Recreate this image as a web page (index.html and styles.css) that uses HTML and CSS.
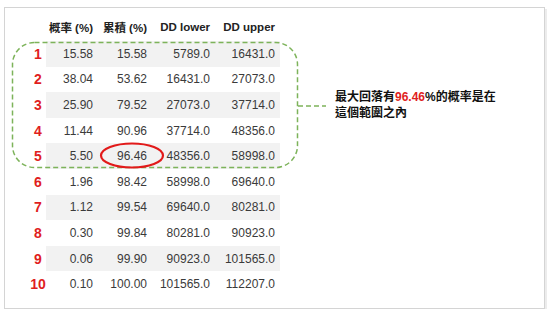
FILE: index.html
```html
<!DOCTYPE html>
<html lang="zh-Hant">
<head>
<meta charset="utf-8">
<link rel="stylesheet" href="styles.css">
</head>
<body>
<div class="frame">
  <table class="dd">
    <thead>
      <tr><th class="idx"></th><th class="c1">概率 (%)</th><th class="c2">累積 (%)</th><th class="c3">DD lower</th><th class="c4">DD upper</th></tr>
    </thead>
    <tbody>
      <tr class="alt"><td class="idx">1</td><td>15.58</td><td>15.58</td><td>5789.0</td><td>16431.0</td></tr>
      <tr><td class="idx">2</td><td>38.04</td><td>53.62</td><td>16431.0</td><td>27073.0</td></tr>
      <tr class="alt"><td class="idx">3</td><td>25.90</td><td>79.52</td><td>27073.0</td><td>37714.0</td></tr>
      <tr><td class="idx">4</td><td>11.44</td><td>90.96</td><td>37714.0</td><td>48356.0</td></tr>
      <tr class="alt"><td class="idx">5</td><td>5.50</td><td>96.46</td><td>48356.0</td><td>58998.0</td></tr>
      <tr><td class="idx">6</td><td>1.96</td><td>98.42</td><td>58998.0</td><td>69640.0</td></tr>
      <tr class="alt"><td class="idx">7</td><td>1.12</td><td>99.54</td><td>69640.0</td><td>80281.0</td></tr>
      <tr><td class="idx">8</td><td>0.30</td><td>99.84</td><td>80281.0</td><td>90923.0</td></tr>
      <tr class="alt"><td class="idx">9</td><td>0.06</td><td>99.90</td><td>90923.0</td><td>101565.0</td></tr>
      <tr><td class="idx">10</td><td>0.10</td><td>100.00</td><td>101565.0</td><td>112207.0</td></tr>
    </tbody>
  </table>
  <p class="note">最大回落有<span class="hl">96.46</span>%的概率是在<br>這個範圍之內</p>
  <svg class="marks" width="539" height="300" viewBox="0 0 539 300">
    <rect x="7.5" y="34.5" width="285" height="125" rx="22" ry="22" fill="none" stroke="#7db35a" stroke-width="1.5" stroke-dasharray="5 3"/>
    <line x1="293" y1="98" x2="321" y2="98" stroke="#7db35a" stroke-width="1.5" stroke-dasharray="5 3"/>
    <ellipse cx="127" cy="147.5" rx="31" ry="12" fill="none" stroke="#e21a1a" stroke-width="2.2"/>
  </svg>
</div>
</body>
</html>
```

FILE: styles.css
```css
html, body {
  margin: 0;
  padding: 0;
  background: #ffffff;
}

body {
  font-family: "Liberation Sans", Arial, "Noto Sans CJK TC", sans-serif;
}

.frame {
  position: relative;
  margin: 7px 0 0 4px;
  width: 539px;
  height: 300px;
  border: 1px solid #d4d4d4;
  box-shadow: 2px 2px 0 #ececec;
  display: flex;
  align-items: flex-start;
}

.dd {
  border-collapse: collapse;
  margin: 5px 0 0 25px;
  font-size: 12px;
  color: #3a3a3a;
}

.dd th {
  height: 28px;
  padding: 0 5px 0 0;
  text-align: right;
  font-weight: bold;
  color: #222222;
  font-size: 11.5px;
  white-space: nowrap;
  font-family: "Liberation Sans", Arial, "Noto Sans CJK TC", sans-serif;
}

.dd td {
  height: 25.6px;
  padding: 0 5px 0 0;
  text-align: right;
  white-space: nowrap;
}

.dd .c1, .dd tr td:nth-child(2) { width: 47px; }
.dd .c2, .dd tr td:nth-child(3) { width: 49px; }
.dd .c3, .dd tr td:nth-child(4) { width: 58px; }
.dd .c4, .dd tr td:nth-child(5) { width: 60px; }

.dd tr.alt td { background: #f2f2f2; }
.dd tr.alt td.idx { background: transparent; }

.dd .idx {
  width: 16px;
  padding: 0;
  text-align: center;
  color: #e01e1e;
  font-weight: bold;
  font-size: 14px;
}

.note {
  margin: 81px 0 0 55px;
  font-size: 12px;
  line-height: 16px;
  font-weight: bold;
  color: #111111;
  font-family: "Liberation Sans", Arial, "Noto Sans CJK TC", sans-serif;
}

.note .hl {
  color: #e01e1e;
}

.marks {
  position: absolute;
  left: 0;
  top: 0;
  pointer-events: none;
}
```
